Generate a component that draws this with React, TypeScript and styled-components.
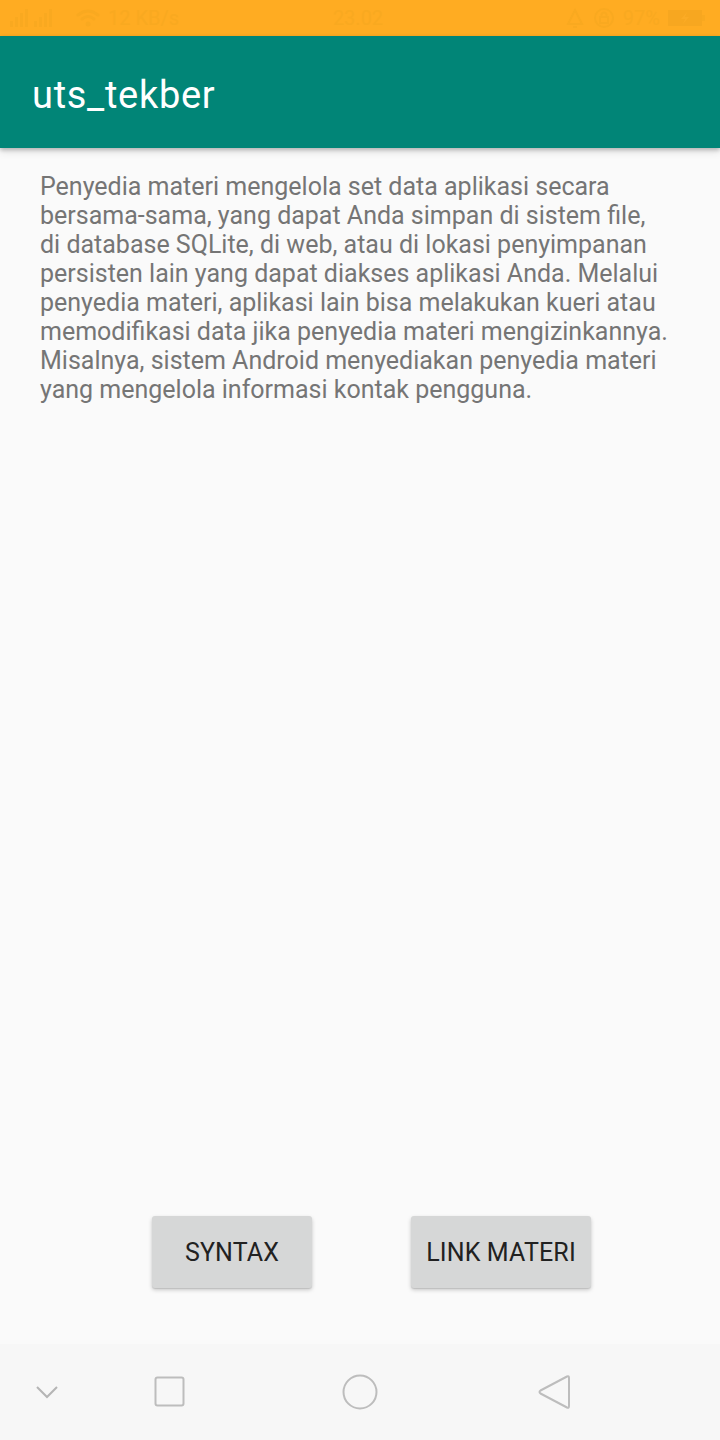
import React from "react";
import styled, { createGlobalStyle } from "styled-components";

const Global = createGlobalStyle`
  html, body { margin: 0; padding: 0; background: #fafafa; }
  body { font-family: Roboto, "Noto Sans", "Liberation Sans", sans-serif; }
  * { box-sizing: border-box; }
`;

const Screen = styled.div`
  width: 720px;
  height: 1440px;
  display: flex;
  flex-direction: column;
  background: #fafafa;
  overflow: hidden;
`;

const StatusBar = styled.div`
  height: 36px;
  flex: none;
  background: #ffac22;
  display: grid;
  grid-template-columns: 1fr auto 1fr;
  align-items: center;
  padding: 0 14px 0 10px;
  font-size: 20px;
`;

const StatusGroup = styled.div<{ $end?: boolean }>`
  display: flex;
  align-items: center;
  gap: 8px;
  justify-content: ${(p) => (p.$end ? "flex-end" : "flex-start")};
`;

const StatusText = styled.span`
  font-size: 20px;
  line-height: 1;
  color: #f9a920;
`;

const AppBar = styled.header`
  height: 112px;
  flex: none;
  background: #018577;
  display: flex;
  align-items: center;
  padding: 6px 0 0 32px;
  box-shadow: 0 2px 4px rgba(0, 0, 0, 0.22), 0 4px 8px rgba(0, 0, 0, 0.1);
  position: relative;
  z-index: 1;
`;

const Title = styled.h1`
  margin: 0;
  color: #ffffff;
  font-family: Roboto, sans-serif;
  font-weight: 400;
  font-size: 38px;
  letter-spacing: 0.7px;
`;

const Body = styled.main`
  flex: 1;
  display: flex;
  flex-direction: column;
  padding: 24px 40px 0 40px;
`;

const Paragraph = styled.p`
  margin: 0;
  color: #757575;
  font-family: Roboto, sans-serif;
  font-size: 25px;
  line-height: 29px;
`;

const Line = styled.span`
  display: block;
  white-space: nowrap;
`;

const ButtonRow = styled.div`
  margin-top: auto;
  display: flex;
  gap: 99px;
  padding-left: 112px;
  margin-bottom: 56px;
`;

const Button = styled.button<{ $w: number }>`
  width: ${(p) => p.$w}px;
  height: 72px;
  border: none;
  border-radius: 3px;
  background: #d6d7d7;
  color: #212121;
  font-family: Roboto, sans-serif;
  font-size: 25px;
  font-weight: 400;
  letter-spacing: 0.15px;
  box-shadow: 0 2px 4px rgba(0, 0, 0, 0.2), 0 1px 1px rgba(0, 0, 0, 0.1);
  padding: 0;
`;

const NavBar = styled.nav`
  height: 96px;
  flex: none;
  background: #f7f7f7;
  display: flex;
  align-items: center;
`;

const NavSlot = styled.div<{ $w: number }>`
  width: ${(p) => p.$w}px;
  display: flex;
  justify-content: center;
  align-items: center;
`;

const lines = [
  "Penyedia materi mengelola set data aplikasi secara",
  "bersama-sama, yang dapat Anda simpan di sistem file,",
  "di database SQLite, di web, atau di lokasi penyimpanan",
  "persisten lain yang dapat diakses aplikasi Anda. Melalui",
  "penyedia materi, aplikasi lain bisa melakukan kueri atau",
  "memodifikasi data jika penyedia materi mengizinkannya.",
  "Misalnya, sistem Android menyediakan penyedia materi",
  "yang mengelola informasi kontak pengguna.",
];

const faint = "#f9a920";

export default function App() {
  return (
    <>
      <Global />
      <Screen>
        <StatusBar>
          <StatusGroup>
            <svg width="58" height="20" viewBox="0 0 58 20">
              <g fill={faint}>
                <rect x="0" y="13" width="3" height="6" />
                <rect x="5" y="9" width="3" height="10" />
                <rect x="10" y="5" width="3" height="14" />
                <rect x="15" y="1" width="3" height="18" />
                <rect x="24" y="13" width="3" height="6" />
                <rect x="29" y="9" width="3" height="10" />
                <rect x="34" y="5" width="3" height="14" />
                <rect x="39" y="1" width="3" height="18" />
              </g>
            </svg>
            <svg width="24" height="20" viewBox="0 0 24 20">
              <g fill="none" stroke={faint} strokeWidth="3" strokeLinecap="round">
                <path d="M2 7 Q12 -1 22 7" />
                <path d="M6 11 Q12 6 18 11" />
              </g>
              <circle cx="12" cy="16" r="2.5" fill={faint} />
            </svg>
            <StatusText>12 KB/s</StatusText>
          </StatusGroup>
          <StatusText>23.02</StatusText>
          <StatusGroup $end>
            <svg width="20" height="22" viewBox="0 0 20 22">
              <g fill="none" stroke={faint} strokeWidth="2">
                <path d="M10 3 L17 17 L3 17 Z" />
                <path d="M8 20 H12" />
              </g>
            </svg>
            <svg width="22" height="22" viewBox="0 0 22 22">
              <g fill="none" stroke={faint} strokeWidth="2">
                <circle cx="11" cy="11" r="9" />
                <rect x="7" y="10" width="8" height="6" />
                <path d="M8.5 10 V8 a2.5 2.5 0 0 1 5 0 V10" />
              </g>
            </svg>
            <StatusText>97%</StatusText>
            <svg width="38" height="20" viewBox="0 0 38 20">
              <rect x="0" y="2" width="34" height="16" fill="#f7a720" />
              <rect x="34" y="7" width="3" height="6" fill={faint} />
              <path d="M19 4 L13 11 H17 L15 16 L21 9 H17 Z" fill="#fbab25" />
            </svg>
          </StatusGroup>
        </StatusBar>
        <AppBar>
          <Title>uts_tekber</Title>
        </AppBar>
        <Body>
          <Paragraph>
            {lines.map((l) => (
              <Line key={l}>{l}</Line>
            ))}
          </Paragraph>
          <ButtonRow>
            <Button $w={160}>SYNTAX</Button>
            <Button $w={180}>LINK MATERI</Button>
          </ButtonRow>
        </Body>
        <NavBar>
          <NavSlot $w={96}>
            <svg width="26" height="16" viewBox="0 0 26 16">
              <path d="M2 3 L12 13 L22 3" fill="none" stroke="#b5b5b5" strokeWidth="2" />
            </svg>
          </NavSlot>
          <NavSlot $w={148}>
            <svg width="32" height="32" viewBox="0 0 32 32">
              <rect x="1.5" y="1.5" width="28" height="28" rx="2" fill="none" stroke="#bdbdbd" strokeWidth="2" />
            </svg>
          </NavSlot>
          <NavSlot $w={232}>
            <svg width="36" height="36" viewBox="0 0 36 36">
              <circle cx="18" cy="18" r="16.5" fill="none" stroke="#bdbdbd" strokeWidth="2" />
            </svg>
          </NavSlot>
          <NavSlot $w={156}>
            <svg width="34" height="36" viewBox="0 0 34 36">
              <path d="M30 2.5 Q32 1.5 32 4 V32 Q32 34.5 30 33.5 L3.5 19.5 Q1.5 18 3.5 16.5 Z" fill="none" stroke="#bdbdbd" strokeWidth="2" strokeLinejoin="round" />
            </svg>
          </NavSlot>
        </NavBar>
      </Screen>
    </>
  );
}
